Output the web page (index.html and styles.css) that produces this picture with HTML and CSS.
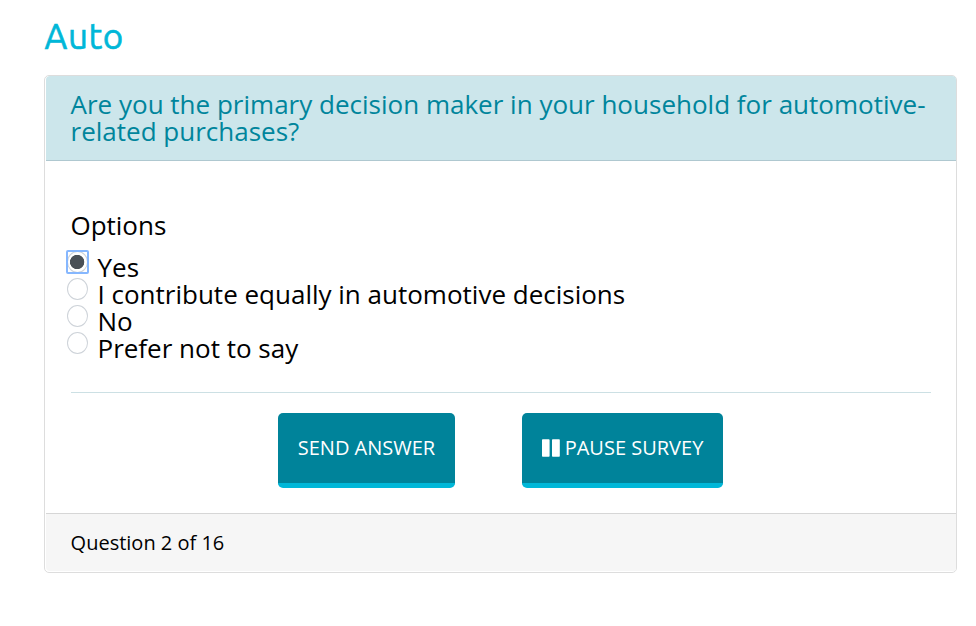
FILE: index.html
```html
<!DOCTYPE html>
<html lang="en">
<head>
    <meta charset="UTF-8">
    <meta name="viewport" content="width=device-width, initial-scale=1.0">
    <title>Auto</title>
    <link rel="stylesheet" href="styles.css">
</head>
<body>
    <h1>Auto</h1>

    <!-- Survey question -->
    <form class="panel">
        <div class="panel-heading">
            <h2>Are you the primary decision maker in your household for automotive-related purchases?</h2>
        </div>

        <div class="panel-body">
            <p class="options-title">Options</p>
            <div class="options">
                <label><span class="radio focused"><input type="radio" name="answer" checked></span><span>Yes</span></label>
                <label><span class="radio"><input type="radio" name="answer"></span><span>I contribute equally in automotive decisions</span></label>
                <label><span class="radio"><input type="radio" name="answer"></span><span>No</span></label>
                <label><span class="radio"><input type="radio" name="answer"></span><span>Prefer not to say</span></label>
            </div>

            <div class="buttons">
                <button type="button" class="send-btn">SEND ANSWER</button>
                <button type="button" class="pause-btn">
                    <svg width="18" height="18" viewBox="0 0 18 18" fill="#fff">
                        <rect x="0" y="0.2" width="7.6" height="17.6" rx="0.8"/>
                        <rect x="10" y="0.2" width="7.8" height="17.6" rx="0.8"/>
                    </svg>
                    <span>PAUSE SURVEY</span>
                </button>
            </div>
        </div>

        <div class="panel-footer">Question 2 of 16</div>
    </form>
</body>
</html>
```

FILE: styles.css
```css
* {
    box-sizing: border-box;
}

body {
    margin: 0;
    padding: 17px 19px 0 44px;
    background-color: #fff;
    color: #000;
    font-family: 'Open Sans', 'Noto Sans', sans-serif;
}

h1 {
    margin: 0 0 20px;
    padding-left: 0.6px;
    color: #00b7d8;
    font-family: Ubuntu, 'Noto Sans', sans-serif;
    font-size: 35px;
    font-weight: 400;
    line-height: 38px;
    letter-spacing: 0.6px;
    -webkit-text-stroke: 0.6px #00b7d8;
}

/* Panel */
.panel {
    height: 498px;
    padding: 0 0 1px 1px;
    display: flex;
    flex-direction: column;
    border: 1px solid #ddd;
    border-radius: 5px;
    overflow: hidden;
}

.panel-heading {
    height: 85px;
    padding: 15px 25px 15px 24.5px;
    background-color: #cce6eb;
    border-bottom: 1px solid #afc8d0;
    border-top-left-radius: 4px;
}

h2 {
    margin: 0;
    color: #00859c;
    font-size: 26.03px;
    font-weight: 400;
    line-height: 27px;
}

.panel-body {
    flex: 1;
    padding: 51px 25px 0;
}

/* Options */
.options-title {
    margin: 0 0 15px -0.6px;
    font-size: 26px;
    line-height: 27px;
}

.options {
    height: 139px;
    border-bottom: 1px solid #cce0e4;
}

.options label {
    display: flex;
    height: 27px;
    font-size: 26px;
    line-height: 27px;
}

.radio {
    width: 21px;
    height: 22px;
    margin: -3px 9.5px 0 -4px;
}

.radio input {
    appearance: none;
    display: block;
    width: 21px;
    height: 22px;
    margin: 0;
    border: 1px solid #ced3d9;
    border-radius: 50%;
}

.radio input:checked {
    background: radial-gradient(circle at 48% 50%, #495057 6.8px, #fff 7.5px);
}

/* Focus ring is square around the round control */
.focused {
    outline: 2px solid #86b7fe;
    outline-offset: -1px;
    border-radius: 1px;
}

/* Buttons */
.buttons {
    display: flex;
    justify-content: center;
    gap: 67px;
    padding: 20px 1px 0 0;
}

.buttons button {
    display: flex;
    align-items: center;
    justify-content: center;
    height: 75px;
    padding: 0;
    background-color: #00839a;
    border: none;
    border-bottom: 5px solid #00b7d8;
    border-radius: 5px;
    color: #fff;
    font-family: inherit;
    font-size: 20px;
}

.buttons .send-btn {
    width: 177px;
    padding-bottom: 2px;
}

.buttons .pause-btn {
    width: 201px;
    gap: 5px;
}

.pause-btn span {
    padding-bottom: 2px;
}

/* Footer */
.panel-footer {
    height: 58px;
    padding: 0 24.6px;
    background-color: #f6f6f6;
    border-top: 1px solid #d6d6d6;
    border-bottom-left-radius: 4px;
    font-size: 20px;
    line-height: 58px;
}
```
